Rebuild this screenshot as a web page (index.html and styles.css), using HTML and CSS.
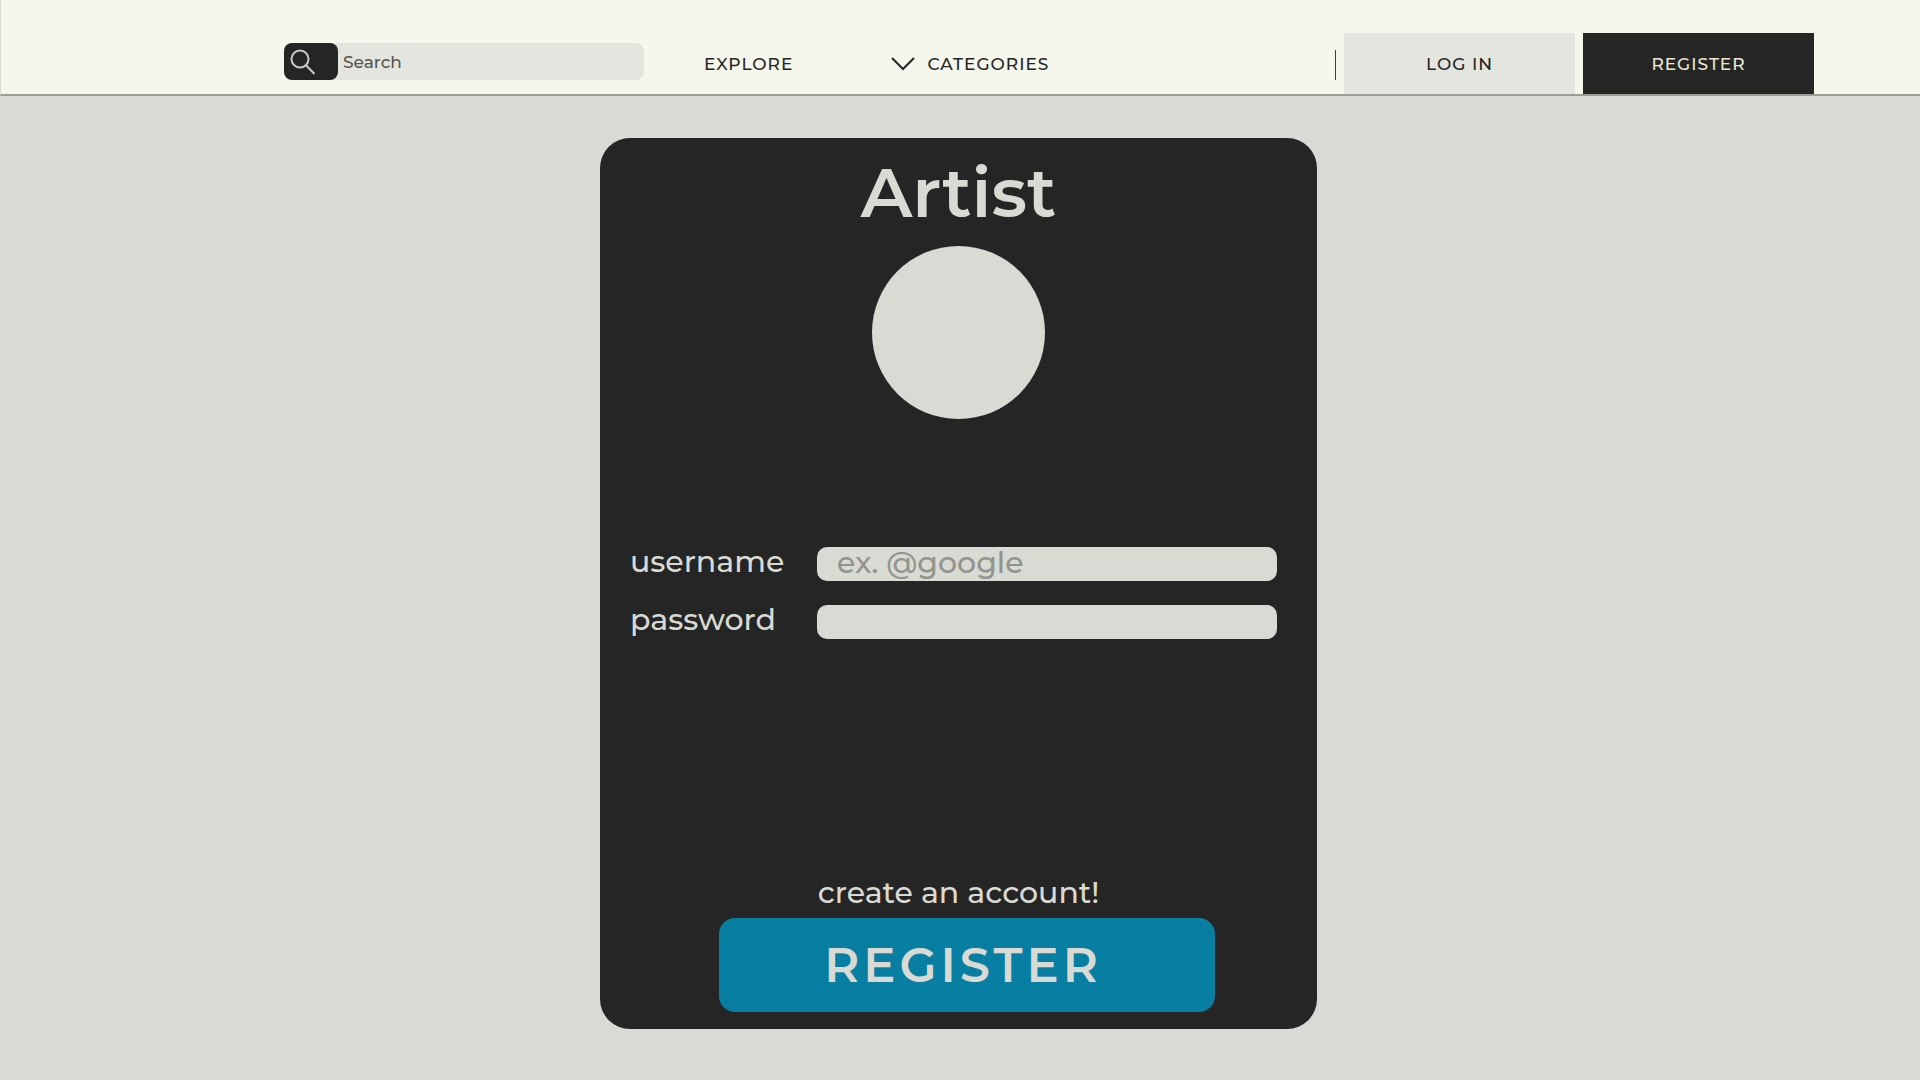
FILE: index.html
```html
<!DOCTYPE html>
<html lang="en">
<head>
<meta charset="utf-8">
<meta name="viewport" content="width=device-width, initial-scale=1">
<title>Artist register</title>
<link rel="stylesheet" href="styles.css">
</head>
<body>
<header class="topbar">
  <form class="search" role="search">
    <button class="search-button" type="button" aria-label="Submit search">
      <svg width="26" height="26" viewBox="0 0 26 26" fill="none" stroke="currentColor" stroke-width="2"><circle cx="10" cy="10" r="8.5"/><path d="M16 16.200L24.500 25"/></svg>
    </button>
    <input class="search-input" type="search" placeholder="Search" aria-label="Search">
  </form>
  <nav class="menu">
    <a class="menu-link" href="#">EXPLORE</a>
    <a class="menu-link" href="#">
      <svg width="24" height="14" viewBox="0 0 24 14" fill="none" stroke="currentColor" stroke-width="2"><path d="M1 1L12 12L23 1"/></svg>
      CATEGORIES
    </a>
  </nav>
  <div class="account">
    <span class="divider"></span>
    <a class="account-link" href="#">LOG IN</a>
    <a class="account-link account-link-dark" href="#">REGISTER</a>
  </div>
</header>
<main class="page">
  <form class="card">
    <h1 class="title">Artist</h1>
    <div class="avatar"></div>
    <div class="fields">
      <label class="label" for="username">username</label>
      <input class="field" id="username" type="text" placeholder="ex. @google">
      <label class="label" for="password">password</label>
      <input class="field" id="password" type="password">
    </div>
    <p class="prompt">create an account!</p>
    <button class="submit" type="button">REGISTER</button>
  </form>
</main>
</body>
</html>
```
FILE: styles.css
```css
* { box-sizing: border-box; }

body {
  margin: 0;
  min-height: 100vh;
  background: #d9dad4;
  color: #252525;
  font-family: Montserrat, Inter, sans-serif;
  font-weight: 500;
}

a { color: inherit; text-decoration: none; }
input, button { font: inherit; border: 0; padding: 0; }

.topbar {
  display: flex;
  min-height: 96px;
  padding: 33px 106px 0 283px;
  background: #f5f6ec;
  border-left: 1px solid #d9dad4;
  border-bottom: 2px solid #9b9d96;
}

.search {
  display: flex;
  width: 360px;
  height: 37px;
  margin-top: 10px;
  background: #e4e5df;
  border-radius: 8px;
}

.search-button {
  width: 54px;
  padding: 0 0 0 6px;
  background: #252525;
  color: #c9cac4;
  border-radius: 8px;
  text-align: left;
}

.search-button svg { display: block; }

.search-input {
  flex: 1;
  min-width: 0;
  padding-left: 5px;
  background: transparent;
  font-size: 17px;
}

.search-input::placeholder { color: #555; opacity: 1; }

.menu {
  display: flex;
  align-items: center;
  gap: 98px;
  margin-left: 60px;
}

.menu-link {
  display: flex;
  align-items: center;
  gap: 12px;
  font-size: 17px;
  letter-spacing: 1px;
}

.account {
  display: flex;
  gap: 8px;
  margin-left: auto;
}

.divider {
  width: 1px;
  height: 30px;
  margin-top: 17px;
  background: #1f4a63;
}

.account-link {
  display: flex;
  align-items: center;
  justify-content: center;
  width: 231px;
  background: #e4e5df;
  font-size: 17px;
  letter-spacing: 1px;
}

.account-link-dark { background: #252525; color: #e9e9d6; }

.page { padding: 42px 3px 51px 0; }

.card {
  display: flex;
  flex-direction: column;
  align-items: center;
  width: 717px;
  max-width: 100%;
  margin: 0 auto;
  padding: 14px 30px 17px;
  background: #252525;
  color: #d9dad4;
  border-radius: 30px;
}

.title {
  margin: 0;
  font-size: 69px;
  font-weight: 600;
  line-height: 80px;
}

.avatar {
  width: 173px;
  height: 173px;
  margin-top: 14px;
  background: #d9dad4;
  border-radius: 50%;
}

.fields {
  display: grid;
  grid-template-columns: 187px 460px;
  row-gap: 24px;
  width: 100%;
  margin-top: 128px;
}

.label { font-size: 30px; line-height: 30px; }

.field {
  height: 34px;
  padding: 0 20px 4px;
  background: #d9dad4;
  color: #252525;
  border-radius: 10px;
  font-size: 30px;
}

.field::placeholder { color: #92948e; opacity: 1; }

.prompt {
  margin: 234px 0 0;
  font-size: 30px;
  line-height: 40px;
}

.submit {
  width: 496px;
  max-width: 100%;
  height: 94px;
  margin: 5px 0 0 17px;
  padding-right: 8px;
  background: #087fa2;
  color: #d9dad4;
  border-radius: 16px;
  font-size: 48px;
  font-weight: 600;
  letter-spacing: 4px;
}
```
